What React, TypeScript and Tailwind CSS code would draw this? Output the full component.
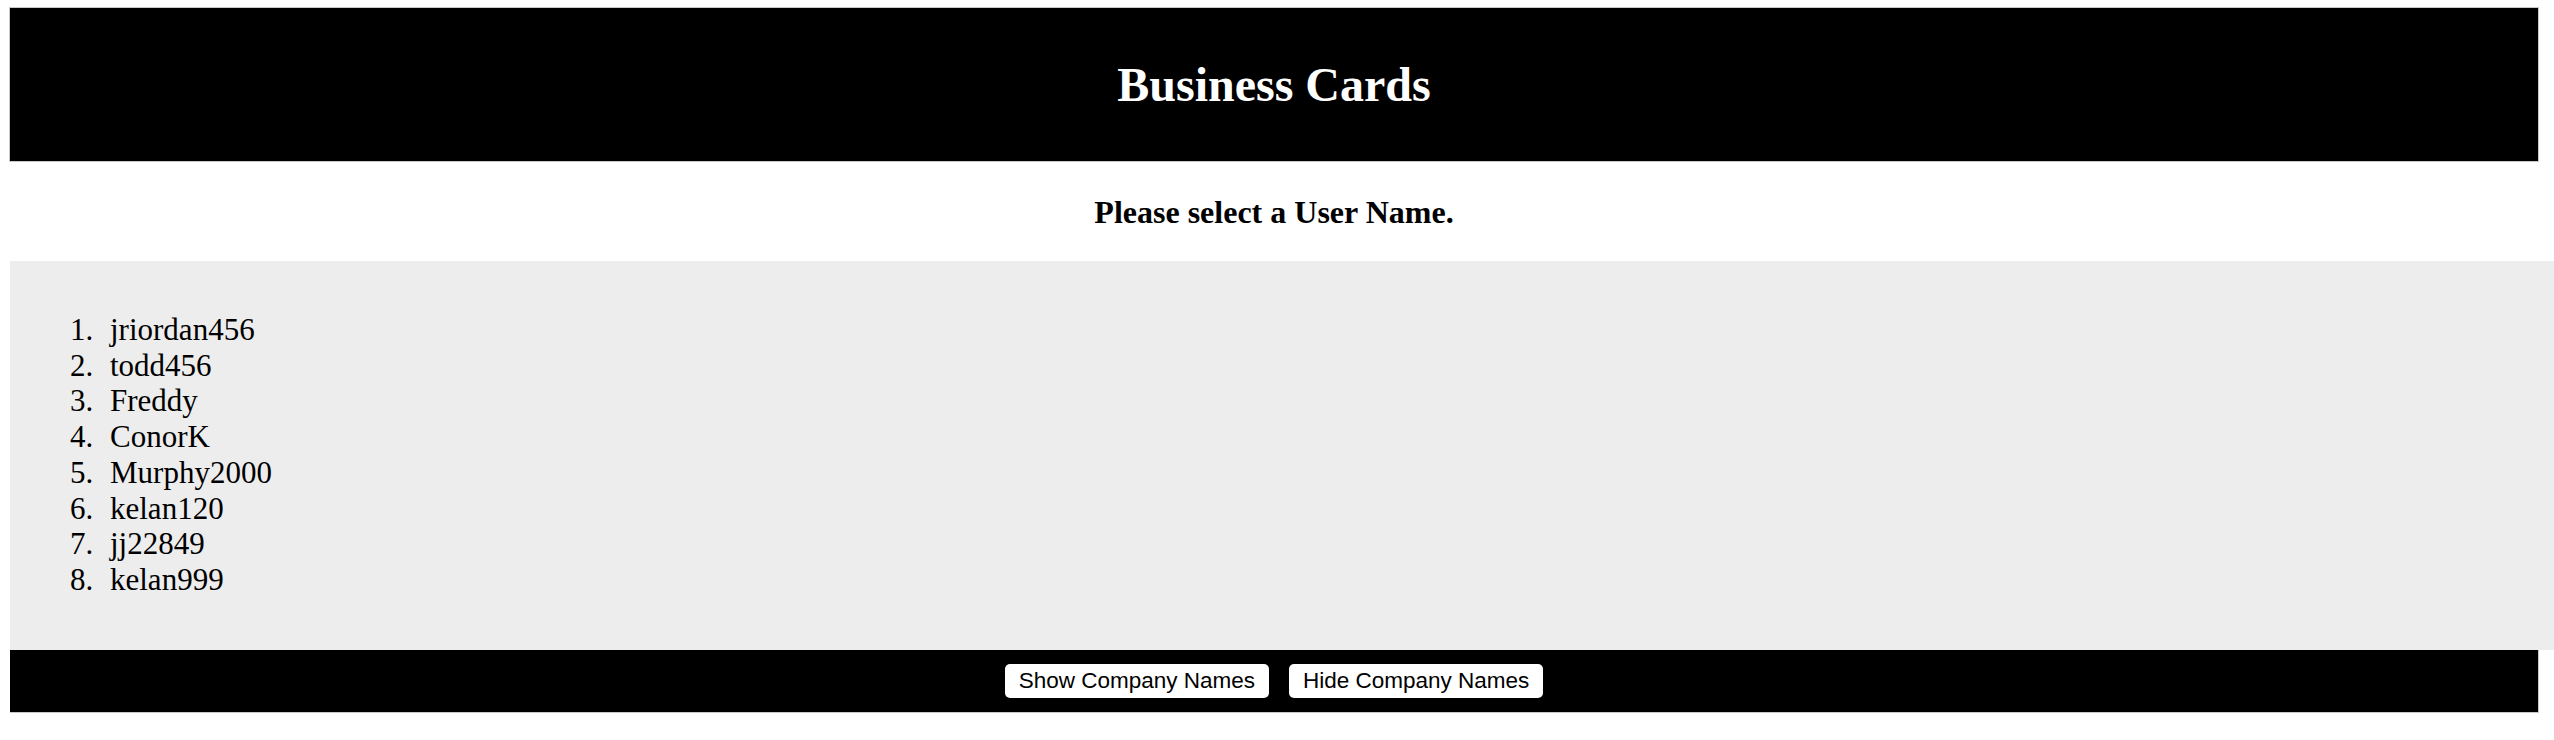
import React from "react";

const users = ["jriordan456", "todd456", "Freddy", "ConorK", "Murphy2000", "kelan120", "jj22849", "kelan999"];

const App = () => {
  return (
    <div className="min-h-[740px] bg-white pt-[7px] overflow-hidden" style={{ fontFamily: '"Liberation Serif", serif' }}>
      <header className="ml-[9px] mr-[15px] h-[155px] flex items-center justify-center bg-black border border-[#c8c8c8]">
        <h1 className="text-[48px] font-bold text-white leading-none">Business Cards</h1>
      </header>

      <div className="ml-[9px] mr-[15px] h-[99px] flex items-center justify-center">
        <h3 className="text-[32px] font-bold text-black leading-none">Please select a User Name.</h3>
      </div>

      <section className="ml-[10px] bg-[#ededed] pt-[51px] pb-[52px]">
        <ol className="pl-[60px]">
          {users.map((name, i) => (
            <li key={name} className="flex text-[31px] leading-[35.7px] text-black">
              <span className="w-[40px]">{i + 1}.</span>
              <span>{name}</span>
            </li>
          ))}
        </ol>
      </section>

      <footer className="ml-[10px] mr-[15px] h-[63px] flex items-center justify-center gap-[20px] bg-black border-b border-r border-[#c8c8c8]">
        <button className="h-[34px] px-[14px] bg-white rounded-[5px] text-[22.5px] text-black" style={{ fontFamily: '"Liberation Sans", sans-serif' }}>
          Show Company Names
        </button>
        <button className="h-[34px] px-[14px] bg-white rounded-[5px] text-[22.5px] text-black" style={{ fontFamily: '"Liberation Sans", sans-serif' }}>
          Hide Company Names
        </button>
      </footer>
    </div>
  );
};

export default App;
